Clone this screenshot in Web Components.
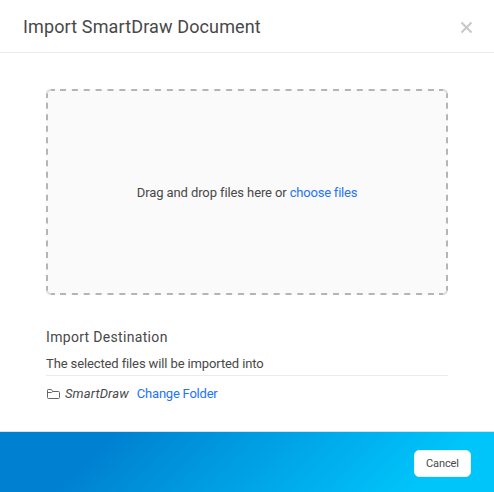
<!DOCTYPE html>
<html lang="en">
<head>
<meta charset="utf-8">
<title>Import SmartDraw Document</title>
<style>
  body{
    margin:0;
    font-family:Roboto, "Liberation Sans", sans-serif;
    color:#484848;
    background:#fff;
  }
</style>
</head>
<body>

<import-dialog></import-dialog>

<script>
class DialogHeader extends HTMLElement {

  constructor(){
    super();

    this.attachShadow({ mode:"open" });

    this.shadowRoot.innerHTML = `
      <style>

        :host{
          display:flex;
          align-items:center;
          justify-content:space-between;
          box-sizing:border-box;
          height:53px;
          padding:0 21px 0 23px;
          border-bottom:1px solid #ebebeb;
        }

        h1{
          margin:0;
          padding-top:2px;
          font-size:18px;
          line-height:24px;
          font-weight:400;
          letter-spacing:0.13px;
          white-space:nowrap;
        }

        button{
          display:flex;
          padding:0;
          margin-top:3px;
          border:0;
          background:none;
        }

      </style>

      <h1><slot></slot></h1>

      <button aria-label="Close">
        <svg width="13" height="13" viewBox="0 0 13 13">
          <path d="M1.5 1.5 11.5 11.5M11.5 1.5 1.5 11.5" fill="none" stroke="#c8c8c8" stroke-width="2"/>
        </svg>
      </button>
    `;
  }

}

class DropZone extends HTMLElement {

  constructor(){
    super();

    this.attachShadow({ mode:"open" });

    this.shadowRoot.innerHTML = `
      <style>

        :host{
          display:grid;
          place-items:center;
          width:402px;
          height:206px;
          border-radius:5px;
          background:#fafafa;
          font-size:13px;
          line-height:18px;
          letter-spacing:-0.1px;
          white-space:nowrap;
        }

        svg, div{
          grid-area:1 / 1;
        }

        div{
          padding-top:2px;
        }

      </style>

      <svg width="402" height="206" viewBox="0 0 402 206" fill="none" stroke="#b5b5b5" stroke-width="2">
        <path d="M14 1H388M14 205H388" stroke-dasharray="6 5.87"/>
        <path d="M1 13.8V192.2M401 13.8V192.2" stroke-dasharray="6 5.48"/>
        <path d="M4.5 1H9M393 1H397.5M4.5 205H9M393 205H397.5M1 4V9M1 197V202M401 4V9M401 197V202"/>
        <path d="M1 4.5Q1.3 1.3 4.5 1M397.5 1Q400.7 1.3 401 4.5M1 201.5Q1.3 204.7 4.5 205M397.5 205Q400.7 204.7 401 201.5" stroke="#dedede"/>
      </svg>

      <div><slot></slot></div>
    `;
  }

}

class LinkText extends HTMLElement {

  constructor(){
    super();

    this.attachShadow({ mode:"open" });

    this.shadowRoot.innerHTML = `
      <style>

        :host{
          color:#2474f5;
          letter-spacing:-0.22px;
          cursor:pointer;
        }

      </style>

      <slot></slot>
    `;
  }

}

class ImportDestination extends HTMLElement {

  constructor(){
    super();

    this.attachShadow({ mode:"open" });

    this.shadowRoot.innerHTML = `
      <style>

        :host{
          display:block;
          font-size:13px;
          line-height:18px;
          white-space:nowrap;
        }

        h2{
          margin:0 0 9px;
          font-size:14px;
          line-height:18px;
          font-weight:400;
          letter-spacing:0.32px;
        }

        p{
          margin:0;
          padding-bottom:2px;
          border-bottom:1px solid #ebebeb;
          letter-spacing:-0.12px;
        }

        .folder{
          display:flex;
          align-items:center;
          padding-top:9px;
        }

        svg{
          margin:-1px 5px 0 1px;
        }

        em{
          margin-right:8px;
          letter-spacing:0.12px;
        }

      </style>

      <h2>Import Destination</h2>
      <p>The selected files will be imported into</p>

      <div class="folder">
        <svg width="13" height="12" viewBox="0 0 13 12">
          <path d="M.5 9.5V2.2Q.5 1.5 1.2 1.5H4.3L5.7 3.5H11.4Q12.5 3.5 12.5 4.5V9.5Q12.5 10.5 11.5 10.5H1.5Q.5 10.5 .5 9.5ZM.5 4.5H4.6L5.7 3.5" fill="none" stroke="#666"/>
        </svg>
        <em><slot name="folder"></slot></em>
        <slot name="action"></slot>
      </div>
    `;
  }

}

class DialogFooter extends HTMLElement {

  constructor(){
    super();

    this.attachShadow({ mode:"open" });

    this.shadowRoot.innerHTML = `
      <style>

        :host{
          display:flex;
          align-items:center;
          justify-content:flex-end;
          box-sizing:border-box;
          height:61px;
          padding:2px 23px 0 0;
          border-top:1px solid #dedede;
          background:linear-gradient(135deg, #0080d0 20%, #00c5fb 86%);
        }

        button{
          box-sizing:border-box;
          width:57px;
          height:27px;
          padding:1px 0 0;
          border:1px solid #e8eef2;
          border-radius:5px;
          background:#fff;
          color:#484848;
          font-family:inherit;
          font-size:11px;
          letter-spacing:-0.1px;
        }

      </style>

      <button><slot></slot></button>
    `;
  }

}

class ImportDialog extends HTMLElement {

  constructor(){
    super();

    this.attachShadow({ mode:"open" });

    this.shadowRoot.innerHTML = `
      <style>

        :host{
          display:flex;
          flex-direction:column;
          height:492px;
          overflow:hidden;
        }

        main{
          flex:1;
          padding:36px 46px 0;
        }

        import-destination{
          margin-top:33px;
        }

      </style>

      <dialog-header>Import SmartDraw Document</dialog-header>

      <main>

        <drop-zone>Drag and drop files here or <link-text>choose files</link-text></drop-zone>

        <import-destination>
          <span slot="folder">SmartDraw</span>
          <link-text slot="action">Change Folder</link-text>
        </import-destination>

      </main>

      <dialog-footer>Cancel</dialog-footer>
    `;
  }

}

customElements.define("dialog-header", DialogHeader);
customElements.define("drop-zone", DropZone);
customElements.define("link-text", LinkText);
customElements.define("import-destination", ImportDestination);
customElements.define("dialog-footer", DialogFooter);
customElements.define("import-dialog", ImportDialog);
</script>
</body>
</html>
